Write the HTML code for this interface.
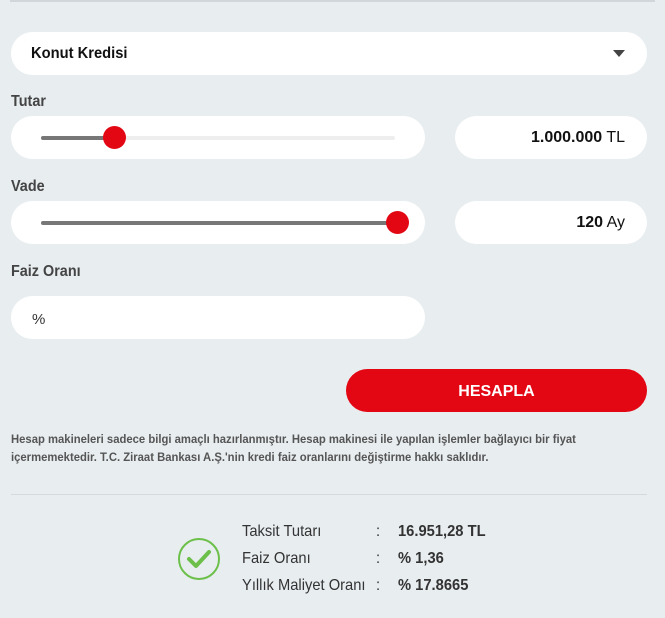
<!DOCTYPE html>
<html><head><meta charset="utf-8"><style>
*{margin:0;padding:0;box-sizing:border-box}
body{width:665px;height:618px;background:#e8edf0;font-family:"Liberation Sans Narrow","Liberation Sans",sans-serif;position:relative;overflow:hidden;color:#222}
.a{position:absolute}
.box{position:absolute;background:#fff;border-radius:22px;height:43px}
.lbl{position:absolute;left:11px;font-size:16px;color:#444;font-weight:bold;transform:scaleX(.9);transform-origin:left}
.track{position:absolute;height:4px;top:20px;border-radius:2px}
.thumb{position:absolute;width:23px;height:23px;border-radius:50%;background:#e30613;top:10px}
.val{position:absolute;right:22px;top:13px;font-size:16px;color:#111}
.res{position:absolute;font-size:16px;color:#333;transform:scaleX(.92);transform-origin:left}
</style></head><body>
<div class="a" style="left:10px;top:0;width:645px;height:2px;background:#d0d6da"></div>
<div class="box" style="left:11px;top:32px;width:636px">
 <div class="a" style="left:20px;top:13px;font-size:16px;font-weight:bold;color:#111;transform:scaleX(.92);transform-origin:left">Konut Kredisi</div>
 <div class="a" style="left:602px;top:18px;width:0;height:0;border-left:6px solid transparent;border-right:6px solid transparent;border-top:7px solid #444"></div>
</div>
<div class="lbl" style="top:93px">Tutar</div>
<div class="box" style="left:11px;top:116px;width:414px">
 <div class="track" style="left:30px;width:354px;background:#eee"></div>
 <div class="track" style="left:30px;width:73px;background:#777"></div>
 <div class="thumb" style="left:92px"></div>
</div>
<div class="box" style="left:455px;top:116px;width:192px"><div class="val"><b>1.000.000</b> TL</div></div>
<div class="lbl" style="top:178px">Vade</div>
<div class="box" style="left:11px;top:201px;width:414px">
 <div class="track" style="left:30px;width:356px;background:#777"></div>
 <div class="thumb" style="left:375px"></div>
</div>
<div class="box" style="left:455px;top:201px;width:192px"><div class="val"><b>120</b> Ay</div></div>
<div class="lbl" style="top:263px">Faiz Oranı</div>
<div class="box" style="left:11px;top:296px;width:414px"><div class="a" style="left:21px;top:15px;font-size:15px;color:#333">%</div></div>
<div class="a" style="left:346px;top:369px;width:301px;height:43px;border-radius:22px;background:#e30613;color:#fff;font-weight:bold;font-size:16px;text-align:center;line-height:45px">HESAPLA</div>
<div class="a" style="left:11px;top:430px;width:680px;font-size:12px;line-height:18px;font-weight:bold;color:#555;transform:scaleX(.94);transform-origin:left">Hesap makineleri sadece bilgi amaçlı hazırlanmıştır. Hesap makinesi ile yapılan işlemler bağlayıcı bir fiyat<br>içermemektedir. T.C. Ziraat Bankası A.Ş.'nin kredi faiz oranlarını değiştirme hakkı saklıdır.</div>
<div class="a" style="left:11px;top:494px;width:636px;height:1px;background:#d5dade"></div>
<svg class="a" style="left:177px;top:537px" width="44" height="44" viewBox="0 0 44 44"><circle cx="22" cy="22" r="20" fill="none" stroke="#6cc04a" stroke-width="2"/><path d="M12 22 L19 29 L32 15" fill="none" stroke="#6cc04a" stroke-width="4" stroke-linecap="round" stroke-linejoin="round"/></svg>
<div class="res" style="left:242px;top:523px">Taksit Tutarı</div>
<div class="res" style="left:242px;top:550px">Faiz Oranı</div>
<div class="res" style="left:242px;top:577px">Yıllık Maliyet Oranı</div>
<div class="res" style="left:376px;top:523px">:</div>
<div class="res" style="left:376px;top:550px">:</div>
<div class="res" style="left:376px;top:577px">:</div>
<div class="res" style="left:398px;top:523px;font-weight:bold">16.951,28 TL</div>
<div class="res" style="left:398px;top:550px;font-weight:bold">% 1,36</div>
<div class="res" style="left:398px;top:577px;font-weight:bold">% 17.8665</div>
</body></html>
